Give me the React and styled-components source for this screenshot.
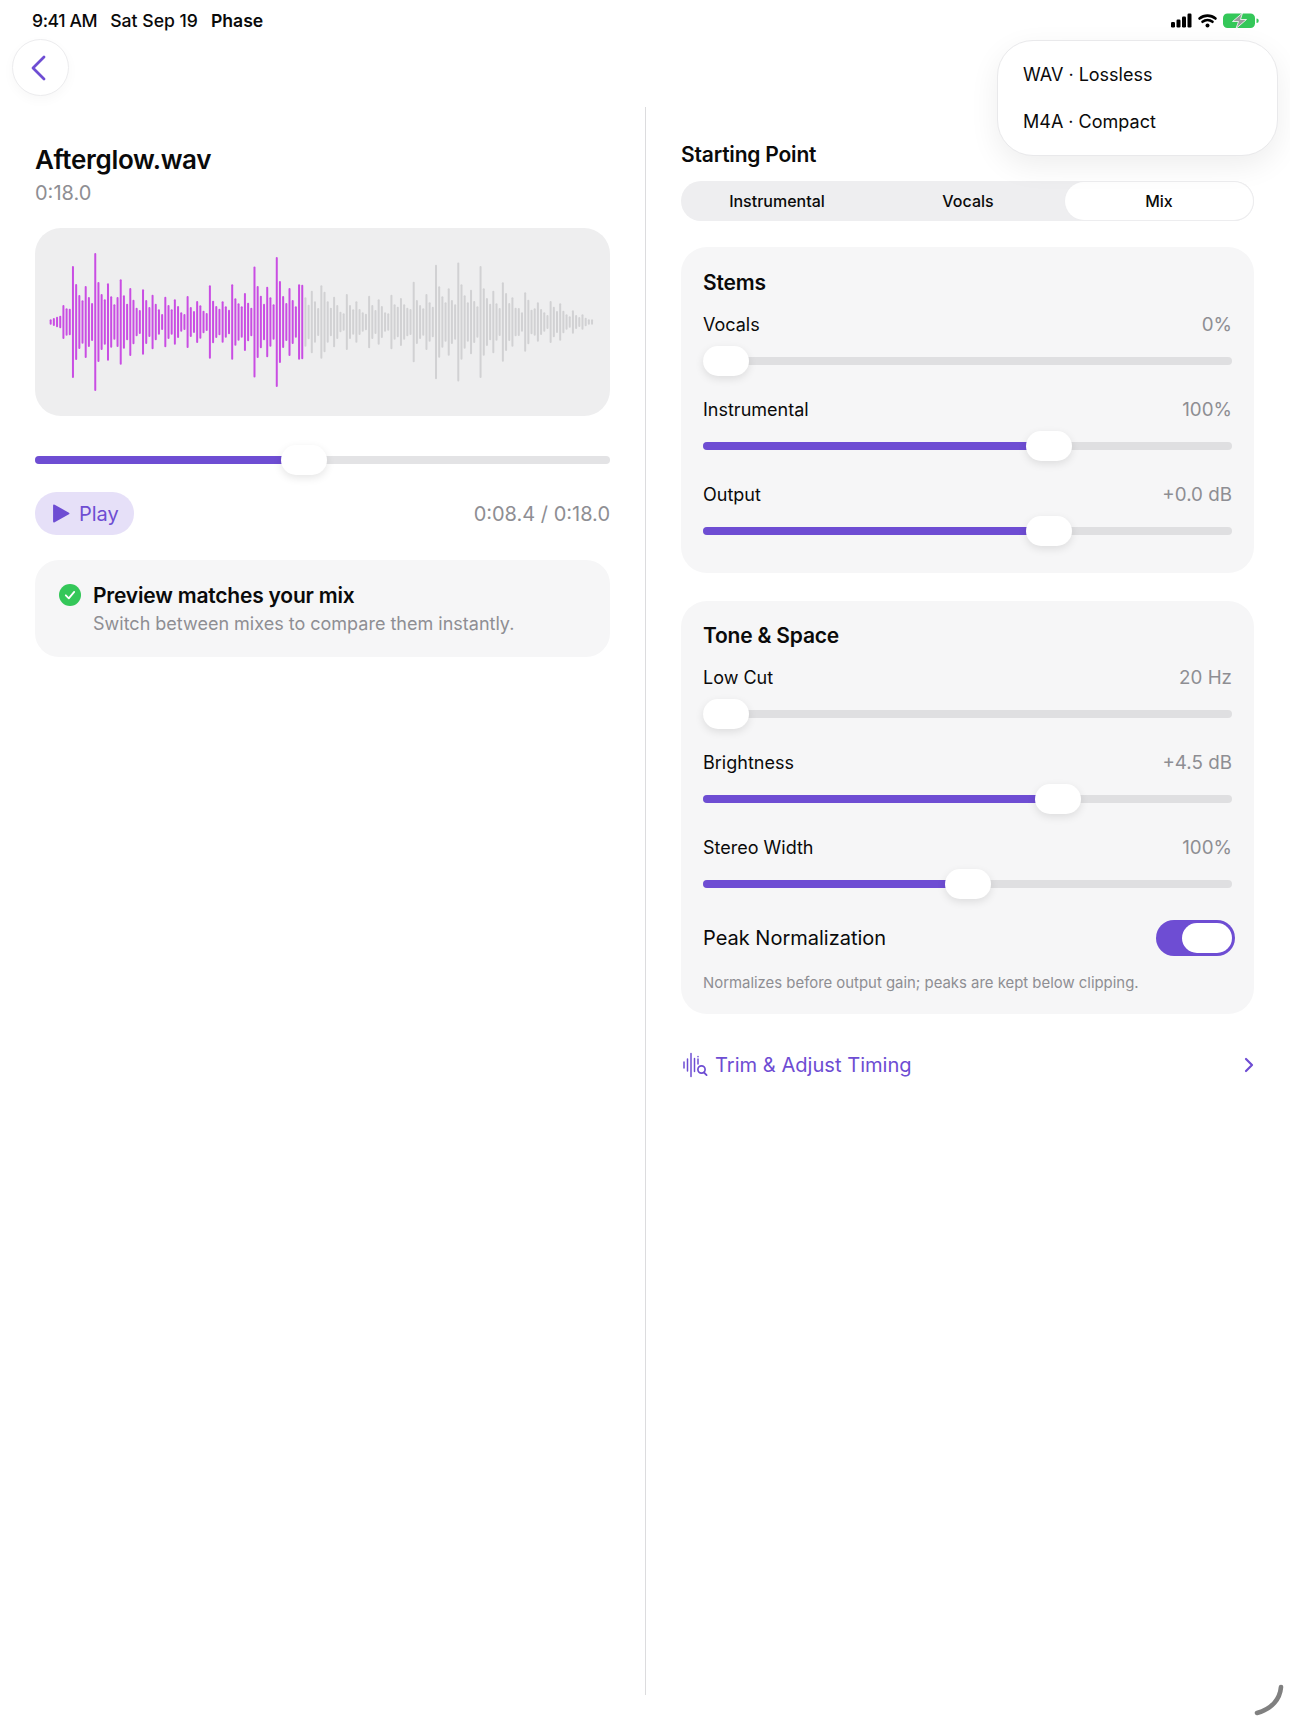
import styled, { createGlobalStyle } from 'styled-components';

const purple = '#6e4dd3';
const gray = '#8e8e93';

const playedBars = [
	2.7, 4, 5.3, 6.3, 17, 13.7, 13.3, 56, 38, 27, 21.7, 36, 25, 19, 69, 40, 28, 22.7, 38.7, 25.7, 17.7, 25, 42.7, 26.7,
	18.3, 34, 22.3, 14.3, 12, 32.7, 22, 15, 27.3, 18.3, 12.7, 8, 25.3, 17, 12.7, 22.7, 16, 9.7, 8, 26, 15, 11, 21, 16.7,
	11.3, 9, 36.7, 21.3, 16, 13.3, 20.7, 15.7, 12.3, 37.7, 23.7, 18.7, 15.7, 29, 19.3, 14.3, 55.7, 36, 26.3, 18.3, 35.3,
	24.7, 17.7, 65, 41, 26, 19, 34, 22, 15.7, 37.7, 37.3,
];
const restBars = [
	24.7, 17.3, 31.3, 20.7, 14, 36.7, 30.3, 20.7, 14.3, 25.3, 17, 10.3, 8.7, 28, 17, 12.7, 20.7, 13, 9.7, 8.3, 26.3, 17,
	12, 22.7, 16, 9.7, 8.7, 27.3, 17.7, 15.3, 24, 17.7, 14.3, 13, 40.3, 22, 17, 13.7, 28, 19.7, 15.3, 57.3, 35.7, 25.7,
	19.7, 33.7, 22, 17.7, 59.7, 37.7, 26.7, 19.7, 32.3, 21, 15.7, 56, 33.7, 24, 18.3, 31.3, 18.7, 14, 39.7, 29, 19, 24.7,
	14.3, 14, 9.7, 29.7, 22.3, 12.3, 13.7, 19.7, 13, 9.7, 7, 21, 15.3, 11, 18.7, 11.3, 7.7, 5.7, 11.7, 7, 5, 7.7, 4.3, 2.7,
	2.7,
];

const GlobalStyle = createGlobalStyle`
	html, body {
		margin: 0;
		padding: 0;
		background: #fff;
	}

	body {
		font-family: Inter, "Noto Sans", "Liberation Sans", sans-serif;
		color: #0a0a0a;
	}
`;

const Page = styled.div`
	position: relative;
	width: 1290px;
	height: 1720px;
	overflow: hidden;
	background: #fff;
`;

const StatusBar = styled.div`
	display: flex;
	align-items: center;
	height: 39px;
	padding: 2px 31px 0 32px;
	box-sizing: border-box;
	font-size: 17.6px;
	font-weight: 500;

	.spacer {
		flex: 1;
	}

	span + span {
		margin-left: 13px;
	}

	.time {
		letter-spacing: -0.4px;
	}

	.app {
		font-weight: 600;
	}

	svg {
		display: block;
	}
`;

const Nav = styled.div`
	height: 57px;
	padding-left: 12px;
`;

const BackButton = styled.div`
	display: flex;
	align-items: center;
	justify-content: center;
	width: 57px;
	height: 57px;
	box-sizing: border-box;
	border: 1px solid #ececee;
	border-radius: 50%;
	background: #fff;
	box-shadow: 0 4px 12px rgba(0, 0, 0, 0.03);
`;

const Popover = styled.div`
	position: absolute;
	top: 40px;
	left: 997px;
	display: flex;
	flex-direction: column;
	gap: 19px;
	width: 281px;
	height: 116px;
	box-sizing: border-box;
	padding: 20px 25px;
	border: 1px solid #e9e9eb;
	border-radius: 36px;
	background: #fff;
	box-shadow: 0 10px 30px rgba(0, 0, 0, 0.07);
	font-size: 18px;
	line-height: 28px;
	z-index: 2;
`;

const Body = styled.div`
	display: grid;
	grid-template-columns: 646px 1fr;
	height: 1588px;
	margin-top: 11px;
`;

const Left = styled.div`
	padding: 35px 35px 0 35px;
	border-right: 1px solid #dcdcde;
`;

const Right = styled.div`
	padding: 32px 36px 0 35px;
`;

const FileName = styled.div`
	font-size: 26px;
	font-weight: 600;
	line-height: 36px;
	letter-spacing: -0.3px;
`;

const Muted = styled.div`
	color: ${gray};
	font-size: ${(p) => p.$size || 20}px;
	line-height: 28px;
	margin-top: ${(p) => p.$top || 0}px;
`;

const WaveCard = styled.div`
	height: 188px;
	margin-top: 21px;
	border-radius: 26px;
	background: #eeeeef;

	svg {
		display: block;
		width: 100%;
		height: 100%;
	}
`;

const Track = styled.div`
	position: relative;
	height: 8px;
	margin-top: ${(p) => p.$top || 0}px;
	border-radius: 4px;
	background: ${(p) => p.$bg || '#dfdfe1'};
`;

const Fill = styled.div`
	height: 100%;
	border-radius: 4px;
	background: ${purple};
`;

const Thumb = styled.div`
	position: absolute;
	top: -11px;
	width: 46px;
	height: 30px;
	border-radius: 15px;
	background: #fff;
	box-shadow: 0 3px 8px rgba(0, 0, 0, 0.1);
`;

const TransportRow = styled.div`
	display: flex;
	align-items: center;
	justify-content: space-between;
	margin-top: 28px;
`;

const PlayButton = styled.div`
	display: flex;
	align-items: center;
	gap: 9px;
	width: 99px;
	height: 43px;
	box-sizing: border-box;
	padding-left: 17px;
	border-radius: 22px;
	background: #e6e0f8;
	color: ${purple};
	font-size: 20px;
`;

const InfoCard = styled.div`
	display: flex;
	gap: 12px;
	height: 97px;
	box-sizing: border-box;
	margin-top: 25px;
	padding: 22px 24px;
	border-radius: 24px;
	background: #f6f6f7;

	svg {
		flex: none;
		margin-top: 2px;
	}
`;

const InfoTitle = styled.div`
	font-size: 21px;
	font-weight: 600;
	line-height: 28px;
	letter-spacing: -0.2px;
`;

const SectionLabel = styled.div`
	font-size: 21px;
	font-weight: 600;
	line-height: 32px;
	letter-spacing: -0.2px;
`;

const Segments = styled.div`
	display: grid;
	grid-template-columns: repeat(3, 1fr);
	height: 40px;
	margin-top: 10px;
	border-radius: 20px;
	background: #eeeef0;
`;

const Segment = styled.div`
	display: flex;
	align-items: center;
	justify-content: center;
	margin: 1px 1px 1px 2px;
	border-radius: 19px;
	font-size: 16px;
	font-weight: 500;
	background: ${(p) => (p.$active ? '#fff' : 'transparent')};
	box-shadow: ${(p) => (p.$active ? '0 0 0 1px #ededef' : 'none')};
`;

const Card = styled.div`
	height: ${(p) => p.$height}px;
	box-sizing: border-box;
	margin-top: ${(p) => p.$top}px;
	padding: ${(p) => p.$pad}px 22px 0;
	border-radius: 26px;
	background: #f6f6f7;
`;

const CardTitle = styled.div`
	font-size: 21px;
	font-weight: 600;
	line-height: 32px;
	letter-spacing: -0.2px;
`;

const ControlHead = styled.div`
	display: flex;
	align-items: center;
	justify-content: space-between;
	height: 28px;
	font-size: 18px;
	margin-top: ${(p) => p.$top}px;

	span + span {
		color: ${gray};
		font-size: 18.8px;
	}
`;

const ToggleRow = styled.div`
	display: flex;
	align-items: center;
	justify-content: space-between;
	height: 36px;
	margin: 32px -3px 0 0;
	font-size: 20px;
`;

const Switch = styled.div`
	display: flex;
	justify-content: flex-end;
	width: 79px;
	height: 36px;
	box-sizing: border-box;
	padding: 3px;
	border-radius: 18px;
	background: ${purple};

	div {
		width: 50px;
		height: 30px;
		border-radius: 15px;
		background: #fff;
	}
`;

const Note = styled.div`
	margin-top: 15px;
	color: ${gray};
	font-size: 14.9px;
	line-height: 24px;
`;

const LinkRow = styled.div`
	display: flex;
	align-items: center;
	height: 32px;
	margin-top: 35px;
	padding-left: 1px;
	color: ${purple};
	font-size: 20.1px;

	.label {
		flex: 1;
		margin-left: 7px;
	}

	svg {
		display: block;
	}
`;

const HomeCorner = styled.svg`
	position: absolute;
	right: 6px;
	bottom: 4px;
`;

const Slider = ({ at, top, bg, width = 46 }) => (
	<Track $top={top} $bg={bg}>
		<Fill style={{ width: `${at * 100}%` }} />
		<Thumb style={{ left: `calc((100% - ${width}px) * ${at})`, width }} />
	</Track>
);

const Control = ({ label, value, at, first }) => (
	<>
		<ControlHead $top={first ? 11 : 30}>
			<span>{label}</span>
			<span>{value}</span>
		</ControlHead>
		<Slider at={at} top={19} />
	</>
);

const Waveform = () => {
	const bars = [...playedBars, ...restBars];
	return (
		<svg viewBox="0 0 576 188">
			{bars.map((h, i) => (
				<rect
					key={i}
					x={14.7 + i * 3.19}
					y={94 - h}
					width="2"
					height={h * 2}
					rx="1"
					fill={i < playedBars.length ? '#c94de3' : '#d1d1d3'}
				/>
			))}
		</svg>
	);
};

const StatusIcons = () => (
	<svg width="88" height="16" viewBox="0 0 88 16">
		<rect x="0" y="9" width="4" height="5.5" rx="1.2" fill="#000" />
		<rect x="5.5" y="6.5" width="4" height="8" rx="1.2" fill="#000" />
		<rect x="11" y="3.5" width="4" height="11" rx="1.2" fill="#000" />
		<rect x="16.5" y="0.5" width="4" height="14" rx="1.2" fill="#000" />
		<path d="M28.5 5.5a12.5 12.5 0 0 1 16 0M31.5 8.8a8 8 0 0 1 10 0" fill="none" stroke="#000" strokeWidth="2.6" strokeLinecap="round" />
		<circle cx="36.5" cy="12.6" r="2" fill="#000" />
		<rect x="52" y="0.5" width="32" height="14.5" rx="4.5" fill="#34c759" />
		<path d="M85.5 5.5a2.2 2.2 0 0 1 0 4.5z" fill="#34c759" />
		<path d="M71.5 0 61.5 8.5h6l-2.5 7 10.5-9h-6z" fill="#9a9a9c" stroke="#fff" strokeWidth="0.8" />
	</svg>
);

const App = () => {
	return (
		<Page>
			<GlobalStyle />
			<StatusBar>
				<span className="time">9:41 AM</span>
				<span>Sat Sep 19</span>
				<span className="app">Phase</span>
				<div className="spacer" />
				<StatusIcons />
			</StatusBar>
			<Nav>
				<BackButton>
					<svg width="16" height="26" viewBox="0 0 16 26" style={{ marginRight: 5 }}>
						<path d="M14 2 3 13l11 11" fill="none" stroke={purple} strokeWidth="2.8" strokeLinecap="round" strokeLinejoin="round" />
					</svg>
				</BackButton>
			</Nav>
			<Popover>
				<div>WAV · Lossless</div>
				<div>M4A · Compact</div>
			</Popover>
			<Body>
				<Left>
					<FileName>Afterglow.wav</FileName>
					<Muted $top={1}>0:18.0</Muted>
					<WaveCard>
						<Waveform />
					</WaveCard>
					<Slider at={0.465} top={40} bg="#e3e3e5" />
					<TransportRow>
						<PlayButton>
							<svg width="18" height="19" viewBox="0 0 17 18">
								<path d="M1 1.5v15a1 1 0 0 0 1.5.8l13.5-7.5a1 1 0 0 0 0-1.6L2.5.7A1 1 0 0 0 1 1.5z" fill={purple} />
							</svg>
							Play
						</PlayButton>
						<Muted>0:08.4 / 0:18.0</Muted>
					</TransportRow>
					<InfoCard>
						<svg width="22" height="22" viewBox="0 0 22 22">
							<circle cx="11" cy="11" r="11" fill="#34c759" />
							<path d="M6.8 11.3l3 3 5.4-6.4" fill="none" stroke="#fff" strokeWidth="1.8" strokeLinecap="round" strokeLinejoin="round" />
						</svg>
						<div>
							<InfoTitle>Preview matches your mix</InfoTitle>
							<Muted $size={18}>Switch between mixes to compare them instantly.</Muted>
						</div>
					</InfoCard>
				</Left>
				<Right>
					<SectionLabel>Starting Point</SectionLabel>
					<Segments>
						<Segment>Instrumental</Segment>
						<Segment>Vocals</Segment>
						<Segment $active>Mix</Segment>
					</Segments>
					<Card $height={326} $top={26} $pad={20}>
						<CardTitle>Stems</CardTitle>
						<Control first label="Vocals" value="0%" at={0} />
						<Control label="Instrumental" value="100%" at={0.668} />
						<Control label="Output" value="+0.0 dB" at={0.668} />
					</Card>
					<Card $height={413} $top={28} $pad={19}>
						<CardTitle>Tone &amp; Space</CardTitle>
						<Control first label="Low Cut" value="20 Hz" at={0} />
						<Control label="Brightness" value="+4.5 dB" at={0.687} />
						<Control label="Stereo Width" value="100%" at={0.5} />
						<ToggleRow>
							<span>Peak Normalization</span>
							<Switch>
								<div />
							</Switch>
						</ToggleRow>
						<Note>Normalizes before output gain; peaks are kept below clipping.</Note>
					</Card>
					<LinkRow>
						<svg width="26" height="26" viewBox="0 0 26 26" fill="none" stroke={purple} strokeWidth="1.5" strokeLinecap="round">
							<path d="M2 10v6M5.5 7v12M9 1.5v23M12.5 6.5v13M16 7v5M16 4.5v.2" />
							<circle cx="19.5" cy="17.5" r="3.6" strokeWidth="1.7" />
							<path d="M22 20.5l2.6 2.6" strokeWidth="1.8" />
						</svg>
						<span className="label">Trim &amp; Adjust Timing</span>
						<svg width="10" height="16" viewBox="0 0 10 16">
							<path d="M2 2l6 6-6 6" fill="none" stroke={purple} strokeWidth="2.2" strokeLinecap="round" strokeLinejoin="round" />
						</svg>
					</LinkRow>
				</Right>
			</Body>
			<HomeCorner width="30" height="32" viewBox="0 0 30 32">
				<path d="M27 3c-1 12-9 22-24 26" fill="none" stroke="#808080" strokeWidth="4.6" strokeLinecap="round" />
			</HomeCorner>
		</Page>
	);
};

export default App;
